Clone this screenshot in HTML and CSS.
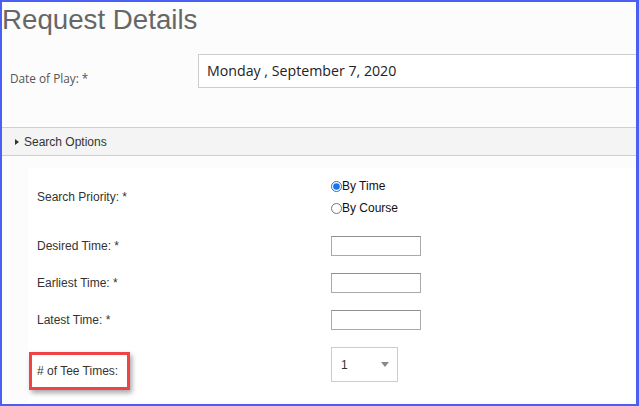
FILE: index.html
```html
<!DOCTYPE html>
<html>
<head>
<meta charset="utf-8">
<link rel="stylesheet" href="styles.css">
</head>
<body>
<div class="frame">
  <h1 class="title">Request Details</h1>
  <div class="date-row">
    <div class="date-label">Date of Play: *</div>
    <div class="date-input">Monday , September 7, 2020</div>
  </div>
  <div class="section-bar">
    <span class="caret"></span>
    <span class="section-title">Search Options</span>
  </div>
  <div class="panel">
    <div class="form-grid">
      <div class="label">Search Priority: *</div>
      <div class="radios">
        <label class="radio"><input type="radio" name="p" checked>By Time</label>
        <label class="radio"><input type="radio" name="p">By Course</label>
      </div>

      <div class="label">Desired Time: *</div>
      <div><input class="time" type="text"></div>

      <div class="label">Earliest Time: *</div>
      <div><input class="time" type="text"></div>

      <div class="label">Latest Time: *</div>
      <div><input class="time" type="text"></div>

      <div class="label label-low"><span class="marked">
        # of Tee Times:<span class="highlight"></span></span></div>
      <div><div class="select"><span>1</span><span class="arrow"></span></div></div>
    </div>
  </div>
</div>
</body>
</html>
```

FILE: styles.css
```css
html, body {
  margin: 0;
  padding: 0;
  background: #fff;
}

.frame {
  width: 639px;
  height: 406px;
  box-sizing: border-box;
  border: 2px solid #4a5ff3;
  border-right-width: 3px;
  background: #fcfcfc;
  overflow: hidden;
  font-family: "Liberation Sans", Arial, sans-serif;
  color: #333;
}

.title {
  margin: 0;
  padding-top: 2px;
  font-family: "Liberation Sans", Arial, sans-serif;
  font-weight: normal;
  font-size: 27.7px;
  line-height: 32px;
  color: #676767;
}

.date-row {
  display: flex;
  align-items: flex-start;
  height: 91px;
}

.date-label {
  width: 188px;
  padding-left: 8px;
  margin-top: 34px;
  font-family: "Open Sans", sans-serif;
  font-size: 11.8px;
  line-height: 16px;
  color: #555;
}

.date-input {
  flex: 1;
  margin-top: 18px;
  height: 34px;
  box-sizing: border-box;
  border: 1px solid #ccc;
  border-right: none;
  background: #fff;
  padding-left: 8px;
  font-family: "Open Sans", sans-serif;
  font-size: 14.2px;
  line-height: 32px;
  color: #222;
}

.section-bar {
  display: flex;
  align-items: center;
  height: 27px;
  border-top: 1px solid #cfcfcf;
  border-bottom: 1px solid #cfcfcf;
  background: #f4f4f4;
  padding-left: 13px;
}

.caret {
  width: 0;
  height: 0;
  border-top: 3px solid transparent;
  border-bottom: 3px solid transparent;
  border-left: 4px solid #333;
  margin-right: 5px;
}

.section-title {
  font-size: 12px;
  color: #333;
}

.panel {
  margin: 12px 0 0 26px;
  background: #fff;
  padding: 7px 0 20px 9px;
}

.form-grid {
  display: grid;
  grid-template-columns: 294px auto;
  row-gap: 17px;
  align-items: center;
}

.label {
  font-size: 12px;
  line-height: 14px;
  color: #333;
}

.label-low {
  align-self: start;
  padding-top: 17px;
}

.radios {
  display: flex;
  flex-direction: column;
}

.radio {
  display: flex;
  align-items: center;
  height: 22px;
  font-size: 12px;
  color: #111;
}

.radio input {
  margin: 0;
  width: 11px;
  height: 11px;
  accent-color: #1a73e8;
}

.time {
  display: block;
  width: 90px;
  height: 20px;
  box-sizing: border-box;
  margin: 0;
  border: 1px solid #aaa;
  border-top-color: #8f8f8f;
  background: #fff;
}

.select {
  width: 67px;
  height: 35px;
  box-sizing: border-box;
  border: 1px solid #ccc;
  background: #fff;
  display: flex;
  align-items: center;
  justify-content: space-between;
  padding: 0 8px 0 9px;
  font-size: 12px;
  color: #333;
}

.arrow {
  width: 0;
  height: 0;
  border-left: 4px solid transparent;
  border-right: 4px solid transparent;
  border-top: 5px solid #888;
}

.marked {
  position: relative;
}

.highlight {
  position: absolute;
  left: -8px;
  top: -12px;
  width: 101px;
  height: 38px;
  box-sizing: border-box;
  border: 3px solid #f04347;
  box-shadow: 2px 3px 5px rgba(0, 0, 0, 0.35);
}
```
